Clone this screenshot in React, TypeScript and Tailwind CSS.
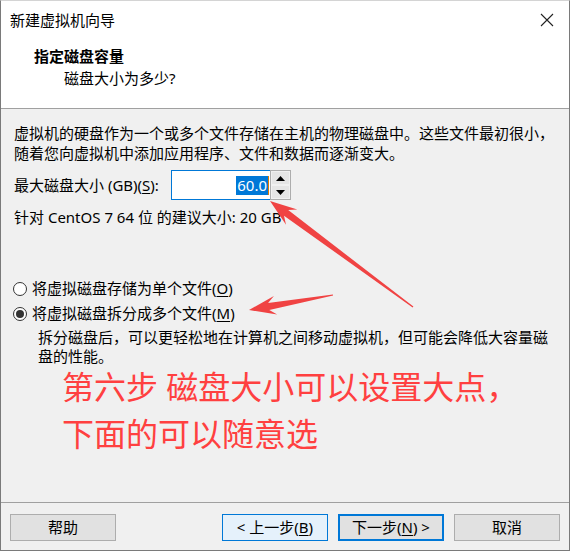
import React from "react";

type P = [number, number];
function arrowPoints(tip: P, tail: P, h = 27, w = 9.5, sw = 3.5, tw = 0.6): string {
  const dx = tail[0] - tip[0];
  const dy = tail[1] - tip[1];
  const L = Math.hypot(dx, dy);
  const u: P = [dx / L, dy / L];
  const n: P = [-u[1], u[0]];
  const at = (d: number, s: number): P => [tip[0] + u[0] * d + n[0] * s, tip[1] + u[1] * d + n[1] * s];
  const pts: P[] = [
    tip,
    at(h, w),
    at(h - 7, sw),
    [tail[0] + n[0] * tw, tail[1] + n[1] * tw],
    [tail[0] - n[0] * tw, tail[1] - n[1] * tw],
    at(h - 7, -sw),
    at(h, -w),
  ];
  return pts.map((p) => `${p[0].toFixed(1)},${p[1].toFixed(1)}`).join(" ");
}

function U({ children }: { children: React.ReactNode }) {
  return <span className="underline underline-offset-2">{children}</span>;
}

function Radio({ checked }: { checked?: boolean }) {
  return (
    <span className="w-[14px] h-[14px] rounded-full border border-[#333] bg-white flex items-center justify-center shrink-0">
      {checked && <span className="w-[8px] h-[8px] rounded-full bg-[#333]" />}
    </span>
  );
}

export default function App() {
  return (
    <div
      className="relative w-[570px] h-[551px] bg-[#f0f0f0] border border-[#7a7a7a] border-t-[#d4d4d4] flex flex-col text-[15px] text-black overflow-hidden"
      style={{ fontFamily: '"Noto Sans", "Noto Sans CJK SC", sans-serif' }}
    >
      {/* Header */}
      <div className="bg-white h-[108px] border-b border-[#a0a0a0] flex flex-col shrink-0">
        <div className="h-[38px] flex items-center justify-between pl-[9px] pr-[14px]">
          <span className="leading-none">新建虚拟机向导</span>
          <svg width="14" height="14" viewBox="0 0 14 14" className="mr-[1px]">
            <path d="M1 1 L13 13 M13 1 L1 13" stroke="#222" strokeWidth="1.1" />
          </svg>
        </div>
        <div className="pl-[33px] mt-[6px] font-bold leading-[22px]">指定磁盘容量</div>
        <div className="pl-[63px] leading-[22px]">磁盘大小为多少?</div>
      </div>

      {/* Body */}
      <div className="flex-1 flex flex-col px-[13px] pt-[14px]">
        <div className="leading-[20px] whitespace-nowrap">
          虚拟机的硬盘作为一个或多个文件存储在主机的物理磁盘中。这些文件最初很小，
          <br />
          随着您向虚拟机中添加应用程序、文件和数据而逐渐变大。
        </div>

        <div className="flex items-center mt-[7px] h-[30px]">
          <span className="w-[157px]">
            最大磁盘大小 (GB)(<U>S</U>):
          </span>
          <div className="w-[100px] h-[30px] bg-white border border-[#0078d7] flex items-center justify-end pr-[1px]">
            <span className="bg-[#0078d7] text-white leading-[19px] px-[1px]">60.0</span>
            <span className="w-[1px] h-[19px] bg-[#e07b00]" />
          </div>
          <div className="w-[21px] h-[30px] border border-[#adadad] bg-[#f0f0f0] flex flex-col ml-[-1px]">
            <div className="flex-1 bg-[#e5e5e5] border border-[#f0f0f0] flex items-center justify-center">
              <svg width="9" height="5" viewBox="0 0 9 5"><path d="M0 5 L4.5 0 L9 5 Z" fill="#000" /></svg>
            </div>
            <div className="flex-1 bg-[#e5e5e5] border border-[#f0f0f0] flex items-center justify-center">
              <svg width="9" height="5" viewBox="0 0 9 5"><path d="M0 0 L4.5 5 L9 0 Z" fill="#000" /></svg>
            </div>
          </div>
        </div>

        <div className="mt-[7px] leading-[20px]">针对 CentOS 7 64 位 的建议大小: 20 GB</div>

        <div className="mt-[52px] flex flex-col gap-[6px] -ml-[1px]">
          <div className="flex items-center gap-[5px] h-[19px]">
            <Radio />
            <span>
              将虚拟磁盘存储为单个文件(<U>O</U>)
            </span>
          </div>
          <div className="flex items-center gap-[5px] h-[19px]">
            <Radio checked />
            <span>
              将虚拟磁盘拆分成多个文件(<U>M</U>)
            </span>
          </div>
        </div>
        <div className="pl-[24px] mt-[5px] leading-[19px] whitespace-nowrap">
          拆分磁盘后，可以更轻松地在计算机之间移动虚拟机，但可能会降低大容量磁
          <br />
          盘的性能。
        </div>

        <div className="pl-[48px] mt-[-3px] text-[32px] leading-[47px] text-[#ff4040]">
          第六步 磁盘大小可以设置大点，
          <br />
          下面的可以随意选
        </div>
      </div>

      {/* Footer */}
      <div className="h-[48px] border-t border-[#a0a0a0] shrink-0 flex items-start pt-[11px] px-[9px]">
        <button className="w-[106px] h-[27px] bg-[#e1e1e1] border border-[#adadad] flex items-center justify-center">
          帮助
        </button>
        <div className="flex-1" />
        <div className="flex gap-[10px]">
          <button className="w-[106px] h-[27px] bg-[#e5f1fb] border border-[#0078d7] flex items-center justify-center">
            &lt; 上一步(<U>B</U>)
          </button>
          <button className="w-[106px] h-[27px] bg-[#e1e1e1] border-2 border-[#0078d7] flex items-center justify-center">
            下一步(<U>N</U>) &gt;
          </button>
          <button className="w-[106px] h-[27px] bg-[#e1e1e1] border border-[#adadad] flex items-center justify-center">
            取消
          </button>
        </div>
      </div>

      {/* Annotation arrows */}
      <svg className="absolute inset-0 pointer-events-none" width="570" height="551">
        <polygon points={arrowPoints([269, 200], [412, 306])} fill="#f04343" />
        <polygon points={arrowPoints([248, 309], [332, 294])} fill="#f04343" />
      </svg>
    </div>
  );
}
